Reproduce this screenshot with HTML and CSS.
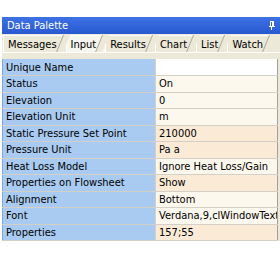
FILE: index.html
```html
<!DOCTYPE html>
<html>
<head>
  <title>Data Palette</title>
  <link rel="stylesheet" href="styles.css">
</head>
<body>
  <div class="palette">
    <div class="titlebar">
      <span>Data Palette</span>
      <svg class="pin" width="6" height="9" viewBox="0 0 6 9">
        <rect x="1" y="0" width="4" height="1" fill="#fff"/>
        <rect x="1" y="1" width="1" height="4" fill="#fff"/>
        <rect x="3" y="1" width="2" height="4" fill="#fff"/>
        <rect x="0" y="5" width="6" height="1" fill="#fff"/>
        <rect x="2" y="6" width="1" height="3" fill="#fff"/>
      </svg>
    </div>

    <div class="tabs">
      <div class="tab">Messages</div>
      <div class="tab active">Input</div>
      <div class="tab">Results</div>
      <div class="tab">Chart</div>
      <div class="tab">List</div>
      <div class="tab">Watch</div>
    </div>

    <table class="grid">
      <tr><td class="name">Unique Name</td><td class="value blank"></td></tr>
      <tr><td class="name">Status</td><td class="value">On</td></tr>
      <tr><td class="name">Elevation</td><td class="value">0</td></tr>
      <tr><td class="name">Elevation Unit</td><td class="value">m</td></tr>
      <tr><td class="name">Static Pressure Set Point</td><td class="value changed">210000</td></tr>
      <tr><td class="name">Pressure Unit</td><td class="value changed">Pa a</td></tr>
      <tr><td class="name">Heat Loss Model</td><td class="value">Ignore Heat Loss/Gain</td></tr>
      <tr><td class="name">Properties on Flowsheet</td><td class="value changed">Show</td></tr>
      <tr><td class="name">Alignment</td><td class="value">Bottom</td></tr>
      <tr><td class="name">Font</td><td class="value">Verdana,9,clWindowText</td></tr>
      <tr><td class="name">Properties</td><td class="value changed">157;55</td></tr>
    </table>
  </div>
</body>
</html>
```

FILE: styles.css
```css
body {
  margin: 0;
  background: #fff;
  font-family: "DejaVu Sans Condensed", "DejaVu Sans", sans-serif;
  font-size: 11px;
  color: #000;
}

.palette {
  margin: 17px 0 0 2px;
  width: 278px;
  background: #ece9d8;
}

.titlebar {
  height: 17px;
  background: linear-gradient(to bottom, #3d72e4, #2858d0);
  color: #fff;
  display: flex;
  align-items: center;
  justify-content: space-between;
  padding: 0 5px;
  box-sizing: border-box;
}

.tabs {
  display: flex;
  height: 19px;
  padding: 1px 0 0 1px;
  border-bottom: 1px solid #fff;
  box-sizing: border-box;
  overflow: hidden;
}

.tab {
  position: relative;
  padding: 2px 9px 0 4px;
  border-top: 1px solid #fff;
  border-left: 1px solid #fff;
  background: #ece9d8;
}

.tab:after {
  content: "";
  position: absolute;
  top: -1px;
  right: -4px;
  width: 6px;
  height: 20px;
  border-left: 1px solid #aca899;
  transform: skewX(-22deg);
  transform-origin: top left;
  background: #ece9d8;
  z-index: 1;
}

.tab.active {
  background: #f6f5ee;
}

.grid {
  margin-top: 6px;
  border-collapse: collapse;
  width: 276px;
  border-right: 1px solid #a0a0a0;
}

.grid td {
  height: 16.5px;
  padding: 0 0 0 3px;
  border-bottom: 1px solid #d4d0c8;
  box-sizing: border-box;
  white-space: nowrap;
  overflow: hidden;
}

.grid .name {
  width: 153px;
  background: #a9cbf1;
  border-left: 1px solid #7ea7df;
}

.grid .value {
  max-width: 120px;
  background: #fdf8ee;
  border-left: 1px solid #d4d0c8;
}

.grid .blank {
  background: #fff;
}

.grid .changed {
  background: #fbebd6;
}
```
